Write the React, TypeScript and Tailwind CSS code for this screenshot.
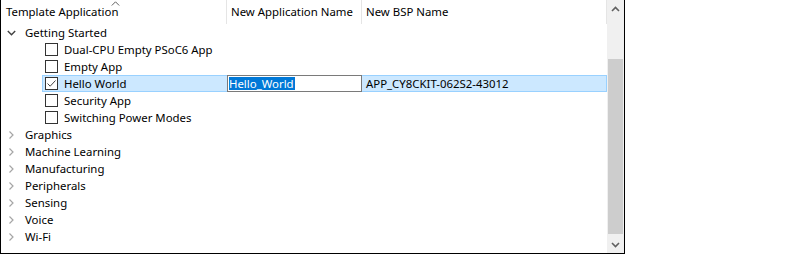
import React from "react";

const font = { fontFamily: '"Noto Sans", "Segoe UI", sans-serif' };

function ChevronRight() {
  return (
    <svg width="8" height="8" viewBox="0 0 8 8" className="shrink-0">
      <path d="M2.5 0.5 L6 4 L2.5 7.5" fill="none" stroke="#a6a6a6" strokeWidth="1.2" />
    </svg>
  );
}

function ChevronDown() {
  return (
    <svg width="9" height="8" viewBox="0 0 9 8" className="shrink-0">
      <path d="M0.8 2 L4.5 5.7 L8.2 2" fill="none" stroke="#404040" strokeWidth="1.4" />
    </svg>
  );
}

function Checkbox({ checked = false }: { checked?: boolean }) {
  return (
    <div className="w-[13px] h-[13px] border border-[#333333] bg-white shrink-0 flex items-center justify-center">
      {checked && (
        <svg width="11" height="11" viewBox="0 0 11 11">
          <path d="M1.5 5.5 L4.2 8.2 L9.5 2.5" fill="none" stroke="#444444" strokeWidth="1" />
        </svg>
      )}
    </div>
  );
}

const categories = [
  "Graphics",
  "Machine Learning",
  "Manufacturing",
  "Peripherals",
  "Sensing",
  "Voice",
  "Wi-Fi",
];

export default function App() {
  return (
    <div className="w-[800px] h-[254px] bg-white text-[11.4px] text-black leading-none" style={font}>
      <div className="w-[625px] h-[254px] flex border-l border-r border-b border-black">
        <div className="flex-1 flex flex-col">
          {/* column headers */}
          <div className="h-[24px] flex items-center relative">
            <div className="w-[226px] h-full flex items-center pl-[5px] border-r border-[#e5e5e5]">
              Template Application
            </div>
            <svg width="9" height="5" viewBox="0 0 9 5" className="absolute left-[110px] top-[1px]">
              <path d="M0.8 4.5 L4.5 0.8 L8.2 4.5" fill="none" stroke="#606060" strokeWidth="1" />
            </svg>
            <div className="w-[135px] h-full flex items-center pl-[4px] border-r border-[#e5e5e5]">
              New Application Name
            </div>
            <div className="flex-1 h-full flex items-center pl-[4px] border-r border-[#e5e5e5]">
              New BSP Name
            </div>
          </div>

          {/* expanded category */}
          <div className="h-[17px] flex items-center pl-[6px] gap-[9px]">
            <ChevronDown />
            <span>Getting Started</span>
          </div>
          {["Dual-CPU Empty PSoC6 App", "Empty App"].map((t) => (
            <div key={t} className="h-[17px] flex items-center pl-[44px] gap-[6px]">
              <Checkbox />
              <span>{t}</span>
            </div>
          ))}

          {/* selected row with inline editor */}
          <div className="h-[17px] flex pl-[41px]">
            <div className="flex-1 flex items-center bg-[#cce8ff] border border-[#99d1ff]">
              <div className="w-[184px] flex items-center pl-[2px] gap-[6px]">
                <Checkbox checked />
                <span>Hello World</span>
              </div>
              <div className="w-[135px] h-[17px] -my-px flex items-center bg-white border border-[#7a7a7a] pl-[1px]">
                <span className="bg-[#0078d7] text-white h-[13px] flex items-center pr-px">Hello_World</span>
              </div>
              <div className="flex-1 pl-[4px]">APP_CY8CKIT-062S2-43012</div>
            </div>
          </div>

          {["Security App", "Switching Power Modes"].map((t) => (
            <div key={t} className="h-[17px] flex items-center pl-[44px] gap-[6px]">
              <Checkbox />
              <span>{t}</span>
            </div>
          ))}

          {categories.map((c) => (
            <div key={c} className="h-[17px] flex items-center pl-[6px] gap-[10px]">
              <ChevronRight />
              <span>{c}</span>
            </div>
          ))}
        </div>

        {/* vertical scrollbar */}
        <div className="w-[17px] bg-[#f0f0f0] flex flex-col">
          <div className="h-[17px] flex items-center justify-center">
            <svg width="9" height="6" viewBox="0 0 9 6">
              <path d="M1 5 L4.5 1.5 L8 5" fill="none" stroke="#606060" strokeWidth="1.6" />
            </svg>
          </div>
          <div className="flex-1 flex flex-col px-px pt-[42px] pb-[2px]">
            <div className="flex-1 bg-[#cdcdcd]" />
          </div>
          <div className="h-[17px] flex items-center justify-center">
            <svg width="9" height="6" viewBox="0 0 9 6">
              <path d="M1 1 L4.5 4.5 L8 1" fill="none" stroke="#606060" strokeWidth="1.6" />
            </svg>
          </div>
        </div>
      </div>
    </div>
  );
}
